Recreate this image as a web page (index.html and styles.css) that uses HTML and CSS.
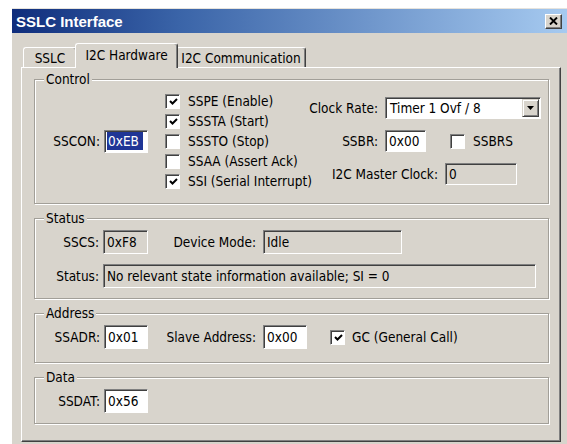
FILE: index.html
```html
<!DOCTYPE html>
<html lang="en">
<head>
<meta charset="utf-8">
<title>SSLC Interface</title>
<link rel="stylesheet" href="styles.css">
</head>
<body>
<div class="window">
  <div class="titlebar">
    <span class="title">SSLC Interface</span>
    <span class="close" aria-label="Close">
      <svg width="9" height="8" viewBox="0 0 9 8"><path d="M1 0.5 L8 7.5 M8 0.5 L1 7.5" stroke="#000" stroke-width="1.9" fill="none"/></svg>
    </span>
  </div>
  <div class="client">
    <div class="tabs">
      <div class="tab tab-sslc">SSLC</div>
      <div class="tab tab-hw active">I2C Hardware</div>
      <div class="tab tab-comm">I2C Communication</div>
    </div>
    <div class="panel">
      <fieldset class="group g-control">
        <legend>Control</legend>
        <div class="control-body">
          <div class="sscon">
            <span class="lab">SSCON:</span>
            <span class="field w44"><span class="sel">0xEB</span></span>
          </div>
          <div class="checks">
            <div class="check"><span class="box"><svg viewBox="0 0 11 11"><path d="M2 5 L4.5 7.5 L9 3" stroke="#000" stroke-width="2" fill="none"/></svg></span>SSPE (Enable)</div>
            <div class="check"><span class="box"><svg viewBox="0 0 11 11"><path d="M2 5 L4.5 7.5 L9 3" stroke="#000" stroke-width="2" fill="none"/></svg></span>SSSTA (Start)</div>
            <div class="check"><span class="box"></span>SSSTO (Stop)</div>
            <div class="check"><span class="box"></span>SSAA (Assert Ack)</div>
            <div class="check"><span class="box"><svg viewBox="0 0 11 11"><path d="M2 5 L4.5 7.5 L9 3" stroke="#000" stroke-width="2" fill="none"/></svg></span>SSI (Serial Interrupt)</div>
          </div>
          <div class="clock">
            <div class="row r-rate">
              <span class="lab">Clock Rate:</span>
              <span class="field combo">Timer 1 Ovf / 8<span class="drop"><svg width="7" height="4" viewBox="0 0 7 4"><path d="M0 0 H7 L3.5 4 Z" fill="#000"/></svg></span></span>
            </div>
            <div class="row r-ssbr">
              <span class="lab">SSBR:</span>
              <span class="field w41">0x00</span>
              <span class="check inline"><span class="box"></span>SSBRS</span>
            </div>
            <div class="row r-master">
              <span class="lab">I2C Master Clock:</span>
              <span class="field ro w72">0</span>
            </div>
          </div>
        </div>
      </fieldset>

      <fieldset class="group g-status">
        <legend>Status</legend>
        <div class="status-body">
          <div class="line">
            <span class="lab l64">SSCS:</span>
            <span class="field ro w45">0xF8</span>
            <span class="lab l100">Device Mode:</span>
            <span class="field ro w139">Idle</span>
          </div>
          <div class="line">
            <span class="lab l64">Status:</span>
            <span class="field ro w433">No relevant state information available; SI = 0</span>
          </div>
        </div>
      </fieldset>

      <fieldset class="group g-address">
        <legend>Address</legend>
        <div class="line pad">
          <span class="lab l65">SSADR:</span>
          <span class="field w44">0x01</span>
          <span class="lab l100">Slave Address:</span>
          <span class="field w44">0x00</span>
          <span class="check inline gc"><span class="box"><svg viewBox="0 0 11 11"><path d="M2 5 L4.5 7.5 L9 3" stroke="#000" stroke-width="2" fill="none"/></svg></span>GC (General Call)</span>
        </div>
      </fieldset>

      <fieldset class="group g-data">
        <legend>Data</legend>
        <div class="line pad">
          <span class="lab l65">SSDAT:</span>
          <span class="field w44">0x56</span>
        </div>
      </fieldset>
    </div>
  </div>
</div>
</body>
</html>
```

FILE: styles.css
```css
html, body {
  margin: 0;
  background: #fff;
  overflow: hidden;
}

body {
  font-family: "DejaVu Sans Condensed", "Liberation Sans", Arial, sans-serif;
  font-stretch: condensed;
  font-size: 13.5px;
  color: #000;
}

/* dialog frame */
.window {
  margin: 8px 0 0 12px;
  width: 555px;
  height: 436px;
  background: #d8d4cc;
  border-top: 1px solid #e6e3dd;
}

.titlebar {
  height: 24px;
  display: flex;
  align-items: center;
  justify-content: space-between;
  padding: 0 5px 0 4px;
  background: linear-gradient(to right, #0f2d7c 0%, #3a64a8 30%, #a6caf0 100%);
}

.title {
  color: #fff;
  font: bold 15px "Liberation Sans", Arial, sans-serif;
}

.close {
  width: 17px;
  height: 15px;
  box-sizing: border-box;
  background: #d8d4cc;
  border: 1px solid;
  border-color: #fff #404040 #404040 #fff;
  box-shadow: inset -1px -1px 0 #808080;
  display: flex;
  align-items: center;
  justify-content: center;
}

.client {
  padding: 10px 6px 0 9px;
}

/* tab strip */
.tabs {
  height: 24px;
  display: flex;
  align-items: flex-end;
  padding-left: 2px;
  position: relative;
  z-index: 2;
}

.tab {
  box-sizing: border-box;
  height: 20px;
  display: flex;
  align-items: center;
  justify-content: center;
  background: #d8d4cc;
  border-top: 1px solid #fff;
  border-left: 1px solid #fff;
  border-right: 1px solid #404040;
  box-shadow: inset -1px 0 0 #808080;
  border-radius: 3px 3px 0 0;
  white-space: nowrap;
}

.tab-sslc { width: 54px; }
.tab-comm { width: 130px; }

.tab.active {
  width: 103px;
  height: 25px;
  margin: 0 -2px -1px;
  position: relative;
  z-index: 1;
  padding-bottom: 3px;
}

.panel {
  box-sizing: border-box;
  height: 375px;
  padding: 3px 11px 0 12px;
  border: 1px solid;
  border-color: #fff #404040 #404040 #fff;
  box-shadow: inset -1px -1px 0 #808080;
  display: flex;
  flex-direction: column;
  gap: 6px;
}

/* etched group boxes */
.group {
  box-sizing: border-box;
  margin: 0;
  padding: 0;
  min-width: 0;
  border: 1px solid #a29f98;
  box-shadow: inset 1px 1px 0 #fff, 1px 1px 0 #fff;
}

.group legend {
  margin-left: 9px;
  padding: 0 2px;
  line-height: 16px;
  background: #d8d4cc;
}

.g-control { height: 133px; }
.g-status { height: 89px; }
.g-address { height: 58px; }
.g-data { height: 55px; }

/* sunken edit fields */
.field {
  box-sizing: border-box;
  height: 23px;
  display: flex;
  align-items: center;
  padding-left: 3px;
  background: #fff;
  border: 1px solid;
  border-color: #808080 #fff #fff #808080;
  box-shadow: inset 1px 1px 0 #404040;
  white-space: nowrap;
  overflow: hidden;
}

.field.ro { background: #d8d4cc; }

.w41 { width: 41px; }
.w44 { width: 44px; }
.w45 { width: 45px; }
.w72 { width: 72px; }
.w139 { width: 139px; }
.w433 { width: 433px; }

.sel {
  background: #1f3596;
  color: #fff;
  line-height: 18px;
  padding: 0 4px 0 1px;
  margin-left: -1px;
}

.lab {
  white-space: nowrap;
}

/* checkboxes */
.check {
  display: flex;
  align-items: center;
  height: 20px;
  white-space: nowrap;
}

.box {
  box-sizing: border-box;
  width: 15px;
  height: 15px;
  margin-right: 8px;
  flex: none;
  background: #fff;
  border: 1px solid;
  border-color: #808080 #fff #fff #808080;
  box-shadow: inset 1px 1px 0 #404040;
  display: flex;
  align-items: center;
  justify-content: center;
}

.box svg {
  width: 11px;
  height: 11px;
  margin: 1px 0 0 1px;
}

/* control group */
.control-body {
  height: 108px;
  display: flex;
  align-items: center;
}

.sscon {
  width: 113px;
  flex: none;
  display: flex;
  align-items: center;
  justify-content: flex-end;
  gap: 4px;
}

.checks {
  margin-left: 17px;
  width: 126px;
  flex: none;
  display: flex;
  flex-direction: column;
}

.clock {
  margin-left: auto;
  margin-right: 6px;
  width: 250px;
  flex: none;
  display: flex;
  flex-direction: column;
  gap: 11px;
}

.row {
  display: grid;
  align-items: center;
  column-gap: 7px;
  height: 22px;
}

.row .lab { text-align: right; }
.row .field { height: 22px; }

.r-rate { grid-template-columns: 86px 156px; }
.r-ssbr { grid-template-columns: 86px 41px auto; }
.r-master { grid-template-columns: 146px 72px; }

.check.inline { height: 22px; }
.r-ssbr .check { margin-left: 17px; }

.combo {
  padding-left: 4px;
  justify-content: space-between;
  padding-right: 1px;
}

.drop {
  box-sizing: border-box;
  width: 17px;
  height: 18px;
  background: #d8d4cc;
  border: 1px solid;
  border-color: #d8d4cc #404040 #404040 #d8d4cc;
  box-shadow: inset 1px 1px 0 #fff, inset -1px -1px 0 #808080;
  display: flex;
  align-items: center;
  justify-content: center;
}

/* status / address / data rows */
.status-body {
  padding-top: 4px;
  display: flex;
  flex-direction: column;
  gap: 10px;
}

.line {
  display: flex;
  align-items: center;
  gap: 4px;
}

.line .field { height: 24px; }

.line.pad { padding-top: 4px; }

.l64 { width: 64px; text-align: right; }
.l65 { width: 65px; text-align: right; }
.l100 { width: 100px; text-align: right; margin-left: 4px; margin-right: 3px; }

.check.gc { margin-left: 19px; }
.check.gc .box { margin-right: 7px; }
```
